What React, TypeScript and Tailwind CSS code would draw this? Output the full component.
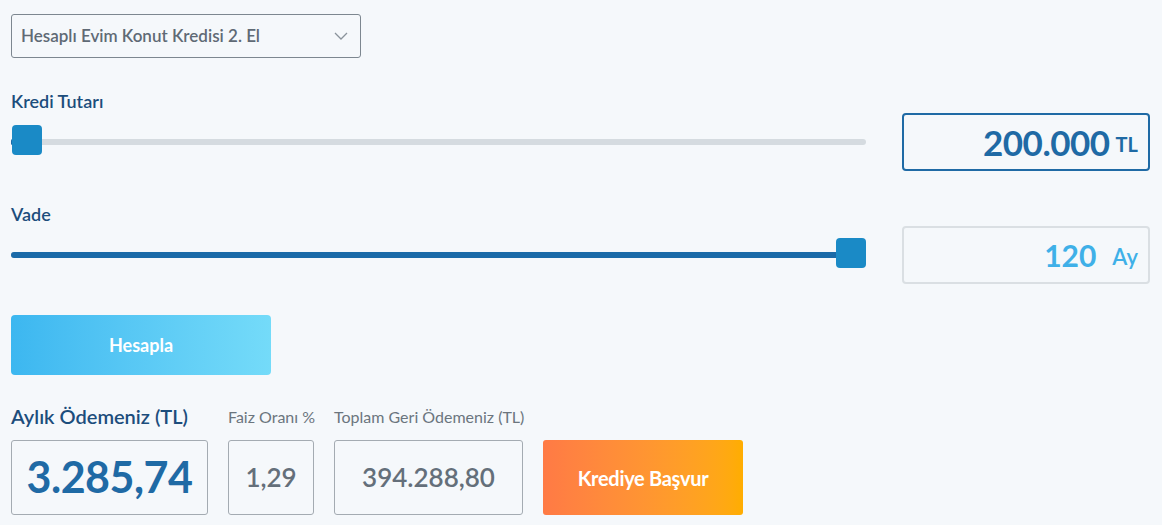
import React, { useState } from 'react'

const font = { fontFamily: "'Source Sans Pro', Lato, 'Liberation Sans', sans-serif" }

const App = () => {
  const [amount, setAmount] = useState(200000)
  const [term, setTerm] = useState(120)

  const amountPct = ((amount - 200000) / (5000000 - 200000)) * 100
  const termPct = ((term - 12) / (120 - 12)) * 100

  return (
    <main className="min-h-[525px] w-full bg-[#f5f8fb] pl-[11px] pr-[12px] pt-[14px]" style={font}>
      {/* kredi tipi */}
      <div className="flex h-[44px] w-[350px] items-center justify-between rounded-[3px] border border-[#7d8790] bg-[#f5f8fb] pl-[9px] pr-[12px]">
        <span className="text-[17px] font-semibold text-[#5f6a75]">Hesaplı Evim Konut Kredisi 2. El</span>
        <svg width="14" height="8" viewBox="0 0 14 8" fill="none">
          <path d="M1 1l6 6 6-6" stroke="#8a939b" strokeWidth="1.3" />
        </svg>
      </div>

      {/* kredi tutari */}
      <div className="mt-[31px] flex items-end gap-[36px]">
        <div className="flex-1">
          <div className="h-[24px] text-[18px] font-semibold leading-[24px] text-[#1c4d7c]">Kredi Tutarı</div>
          <div className="relative flex h-[58px] items-center">
            <div className="h-[6px] w-full rounded-full bg-[#d5dbe0]">
              <div className="h-full min-w-[3px] rounded-full bg-[#1a6aa8]" style={{ width: `${amountPct}%` }} />
            </div>
            <div
              className="absolute top-[12px] h-[30px] w-[30px] rounded-[4px] bg-[#1a8ac6]"
              style={{ left: `calc(${amountPct}% - ${amountPct * 0.3}px + 1px)` }}
              onClick={() => setAmount(amount)}
            />
          </div>
        </div>
        <div className="flex h-[58px] w-[248px] items-center justify-end gap-[6px] rounded-[4px] border-2 border-[#1f6aa5] pr-[10px]">
          <span className="text-[35px] font-bold leading-none tracking-[-0.5px] text-[#1f6aa5]">200.000</span>
          <span className="mt-[4px] text-[20px] font-bold leading-none text-[#1f6aa5]">TL</span>
        </div>
      </div>

      {/* vade */}
      <div className="mt-[31px] flex items-end gap-[36px]">
        <div className="flex-1">
          <div className="h-[24px] text-[18px] font-semibold leading-[24px] text-[#1c4d7c]">Vade</div>
          <div className="relative flex h-[58px] items-center">
            <div className="h-[6px] w-full rounded-full bg-[#d5dbe0]">
              <div className="h-full rounded-full bg-[#1a6aa8]" style={{ width: `${termPct}%` }} />
            </div>
            <div
              className="absolute top-[12px] h-[30px] w-[30px] rounded-[4px] bg-[#1a8ac6]"
              style={{ left: `calc(${termPct}% - ${termPct * 0.3}px)` }}
              onClick={() => setTerm(term)}
            />
          </div>
        </div>
        <div className="flex h-[58px] w-[248px] items-center justify-end gap-[16px] rounded-[4px] border-2 border-[#dadfe3] pr-[10px]">
          <span className="text-[30px] font-bold leading-none text-[#3fb0e8]">120</span>
          <span className="mt-[3px] text-[22px] font-semibold leading-none text-[#3fb0e8]">Ay</span>
        </div>
      </div>

      {/* hesapla */}
      <button className="mt-[31px] flex h-[60px] w-[260px] items-center justify-center rounded-[4px] bg-gradient-to-r from-[#3cb7f0] to-[#74dbf9] text-[18px] font-bold text-white">
        Hesapla
      </button>

      {/* sonuc */}
      <div className="mt-[27px] flex items-end gap-[20px]">
        <div className="flex w-[197px] flex-col">
          <div className="mb-[10px] text-[20px] font-semibold leading-[28px] text-[#1c4d7c]">Aylık Ödemeniz (TL)</div>
          <div className="flex h-[75px] items-center justify-center rounded-[3px] border border-[#a4abb2]">
            <span className="text-[43px] font-bold tracking-[-0.5px] text-[#1f6aa5]">3.285,74</span>
          </div>
        </div>
        <div className="flex w-[86px] flex-col">
          <div className="mb-[13px] whitespace-nowrap text-[16px] leading-[20px] text-[#6b757e]">Faiz Oranı %</div>
          <div className="flex h-[75px] items-center justify-center rounded-[3px] border border-[#a4abb2]">
            <span className="text-[26px] font-semibold text-[#646f7a]">1,29</span>
          </div>
        </div>
        <div className="flex w-[189px] flex-col">
          <div className="mb-[13px] whitespace-nowrap text-[16px] leading-[20px] text-[#6b757e]">Toplam Geri Ödemeniz (TL)</div>
          <div className="flex h-[75px] items-center justify-center rounded-[3px] border border-[#a4abb2]">
            <span className="text-[26px] font-semibold text-[#646f7a]">394.288,80</span>
          </div>
        </div>
        <button className="flex h-[75px] w-[200px] items-center justify-center rounded-[3px] bg-gradient-to-r from-[#ff7a45] to-[#ffad00] text-[20px] font-bold tracking-[-0.3px] text-white">
          Krediye Başvur
        </button>
      </div>
    </main>
  )
}

export default App
